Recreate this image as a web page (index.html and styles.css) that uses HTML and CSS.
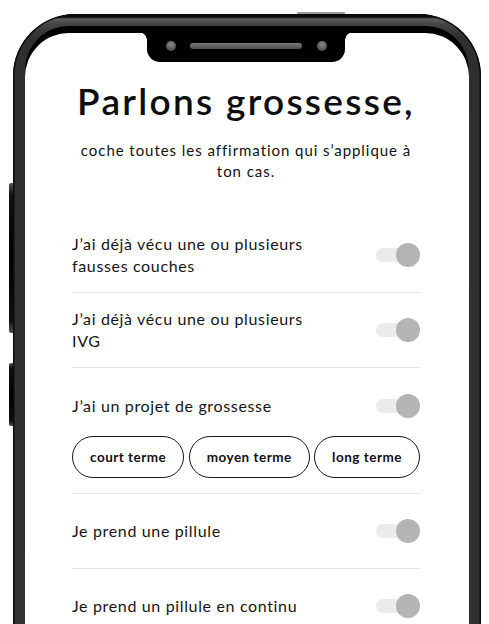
FILE: index.html
```html
<!DOCTYPE html>
<html lang="fr">
<head>
<meta charset="utf-8">
<title>Parlons grossesse</title>
<link rel="stylesheet" href="styles.css">
</head>
<body>
<div class="stage">
  <span class="btn-top"></span>
  <span class="btn-side btn-side-1"></span>
  <span class="btn-side btn-side-2"></span>
  <div class="phone">
    <div class="screen">
      <div class="notch">
        <span class="cam"></span>
        <span class="speaker"></span>
        <span class="cam"></span>
      </div>
      <h1 class="title">Parlons grossesse,</h1>
      <p class="subtitle">coche toutes les affirmation qui s’applique à ton cas.</p>
      <ul class="list">
        <li class="row">
          <span class="label">J’ai déjà vécu une ou plusieurs fausses couches</span>
          <span class="toggle"><span class="track"></span><span class="knob"></span></span>
        </li>
        <li class="row">
          <span class="label">J’ai déjà vécu une ou plusieurs IVG</span>
          <span class="toggle"><span class="track"></span><span class="knob"></span></span>
        </li>
        <li class="row row-project">
          <div class="row-head">
            <span class="label">J’ai un projet de grossesse</span>
            <span class="toggle"><span class="track"></span><span class="knob"></span></span>
          </div>
          <div class="pills">
            <span class="pill">court terme</span>
            <span class="pill">moyen terme</span>
            <span class="pill">long terme</span>
          </div>
        </li>
        <li class="row">
          <span class="label">Je prend une pillule</span>
          <span class="toggle"><span class="track"></span><span class="knob"></span></span>
        </li>
        <li class="row">
          <span class="label">Je prend un pillule en continu</span>
          <span class="toggle"><span class="track"></span><span class="knob"></span></span>
        </li>
      </ul>
    </div>
  </div>
</div>
</body>
</html>
```

FILE: styles.css
```css
* { box-sizing: border-box; }

html, body {
  margin: 0;
  padding: 0;
  background: #ffffff;
  overflow: hidden;
  height: 624px;
}

.stage {
  position: relative;
  padding: 14px 8px 0 13px;
  font-family: "Lato", "Noto Sans", sans-serif;
  color: #111;
}

.btn-top {
  position: absolute;
  left: 297px;
  top: 12px;
  width: 48px;
  height: 2px;
  background: #9a9a9a;
  border-radius: 1px 1px 0 0;
}

.btn-side {
  position: absolute;
  left: 9px;
  width: 4px;
  background: linear-gradient(to bottom, #555 0, #111 8%, #000 50%, #111 92%, #555 100%);
  border-radius: 2px 0 0 2px;
}
.btn-side-1 { top: 183px; height: 150px; }
.btn-side-2 { top: 363px; height: 63px; }

.phone {
  width: 468px;
  height: 720px;
  border-radius: 62px 62px 0 0;
  padding: 19px 12px 0 12px;
  background: linear-gradient(to bottom, #0a0a0a 0, #0a0a0a 3px, #5e5e5e 5px, #454545 10px, #2f2f2f 24px, #313131 100%);
  box-shadow: inset 0 0 0 1.5px #0b0b0b;
  position: relative;
}

.screen {
  position: relative;
  height: 100%;
  background: #fff;
  border-radius: 44px 44px 0 0;
  box-shadow: 0 -7px 0 0 #000;
  padding: 0 49px 0 47px;
}

.notch {
  position: absolute;
  left: 122px;
  top: -1px;
  width: 198px;
  height: 30px;
  background: #000;
  border-radius: 0 0 13px 13px;
  display: flex;
  align-items: center;
  justify-content: center;
  gap: 14.5px;
  padding-bottom: 3px;
}
.notch::before,
.notch::after {
  content: "";
  position: absolute;
  top: 0;
  width: 8px;
  height: 8px;
}
.notch::before {
  left: -8px;
  background: radial-gradient(circle at 0 100%, transparent 7.5px, #000 8px);
}
.notch::after {
  right: -8px;
  background: radial-gradient(circle at 100% 100%, transparent 7.5px, #000 8px);
}

.cam {
  width: 10px;
  height: 10px;
  border-radius: 50%;
  background: radial-gradient(circle at 50% 35%, #8a8a8a 0, #5a5a5a 60%, #3a3a3a 100%);
}
.speaker {
  width: 112px;
  height: 6px;
  border-radius: 3px;
  background: linear-gradient(to bottom, #7a7a7a, #4e4e4e);
}

.title {
  margin: 0;
  padding-top: 46px;
  text-align: center;
  font-size: 37px;
  line-height: 43px;
  font-weight: 600;
  letter-spacing: 2.3px;
  color: #0d0d0d;
}

.subtitle {
  margin: 18px auto 0;
  width: 344px;
  text-align: center;
  font-size: 15px;
  line-height: 21px;
  letter-spacing: 0.95px;
  color: #111;
}

.list {
  list-style: none;
  margin: 36px 0 0;
  padding: 0;
}

.row {
  height: 75px;
  display: flex;
  align-items: center;
  justify-content: space-between;
  border-bottom: 1px solid #e6e6e6;
}

.label {
  font-size: 16px;
  line-height: 22px;
  letter-spacing: 0.65px;
  max-width: 248px;
  color: #151515;
}

.toggle {
  position: relative;
  flex: none;
  width: 44px;
  height: 24px;
}
.track {
  position: absolute;
  left: 0;
  top: 5px;
  width: 38px;
  height: 14px;
  border-radius: 7px;
  background: #ebebeb;
}
.knob {
  position: absolute;
  right: 0;
  top: 0;
  width: 24px;
  height: 24px;
  border-radius: 50%;
  background: #b4b4b4;
}

.row-project {
  height: auto;
  display: block;
  padding: 25px 0 15px;
}
.row-head {
  height: 25px;
  display: flex;
  align-items: center;
  justify-content: space-between;
}

.pills {
  margin-top: 18px;
  display: flex;
  justify-content: space-between;
}
.pill {
  height: 42px;
  padding: 0 17px;
  display: flex;
  align-items: center;
  border: 1.5px solid #1a1a1a;
  border-radius: 21px;
  font-size: 13.5px;
  font-weight: 700;
  letter-spacing: 0.5px;
  color: #111;
}
```
